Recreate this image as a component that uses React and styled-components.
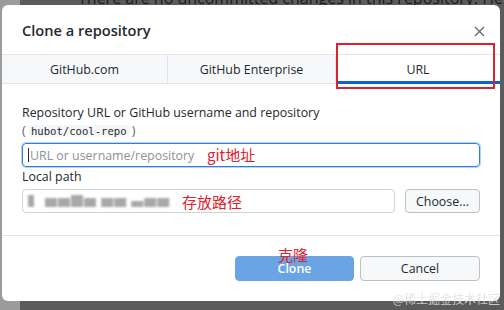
import styled, { createGlobalStyle } from "styled-components"

const Global = createGlobalStyle`
  html, body { margin: 0; padding: 0; }
  body {
    width: 504px;
    height: 310px;
    overflow: hidden;
    font-family: "Open Sans", "Noto Sans", "Noto Sans CJK SC", sans-serif;
    background: #5b5b5b;
  }
`

const Backdrop = styled.div`
  position: relative;
  width: 504px;
  height: 310px;
  overflow: hidden;
  display: flex;
  background: #5b5b5b;
`
const Sidebar = styled.div`
  width: 20px;
  flex-shrink: 0;
  background: #9b9b9b;
`
const BehindText = styled.div`
  margin-top: -13px;
  margin-left: 58px;
  font-size: 16px;
  white-space: nowrap;
  overflow: hidden;
  color: #1c1c1c;
`

const Dialog = styled.div`
  position: absolute;
  left: 2px;
  top: 5px;
  width: 498px;
  height: 296px;
  background: #fff;
  border-radius: 6px;
  display: flex;
  flex-direction: column;
`
const Header = styled.div`
  height: 49px;
  display: flex;
  align-items: center;
  justify-content: space-between;
  padding: 0 14px 0 20px;
`
const Title = styled.div`
  font-size: 14.6px;
  font-weight: 600;
  color: #24292e;
  padding-top: 1px;
`
const Close = styled.button`
  border: 0;
  background: none;
  padding: 0;
  width: 14px;
  height: 14px;
  display: flex;
  align-items: center;
  justify-content: center;
  margin-top: 3px;
`
const Tabs = styled.div`
  display: flex;
  height: 28px;
  border-top: 1px solid #e1e4e8;
  border-bottom: 1px solid #e1e4e8;
`
const Tab = styled.div`
  flex: ${p => p.$w};
  display: flex;
  align-items: center;
  justify-content: center;
  font-size: 12.4px;
  color: #24292e;
  background: ${p => (p.$active ? "#fff" : "#f6f8fa")};
  border-left: ${p => (p.$first ? "0" : "1px solid #e1e4e8")};
  box-shadow: ${p => (p.$active ? "inset 0 -3px 0 #0b64c8" : "none")};
  margin-bottom: ${p => (p.$active ? "-1px" : "0")};
`
const Body = styled.div`
  padding: 20px 20px 0 20px;
  display: flex;
  flex-direction: column;
  height: 131px;
  border-bottom: 1px solid #e1e4e8;
`
const Label = styled.div`
  font-size: 12.4px;
  color: #24292e;
  line-height: 18px;
  margin-top: ${p => p.$mt || 0}px;
`
const Hint = styled.div`
  font-size: 12.4px;
  color: #586069;
  line-height: 18px;
  margin-bottom: 3px;
  code {
    font-family: "DejaVu Sans Mono", "Liberation Mono", monospace;
    font-size: 10.6px;
    color: #24292e;
    background: #f5f6f8;
    padding: 0 2px;
    border-radius: 3px;
  }
`
const Row = styled.div`
  display: flex;
  gap: 10px;
  margin-top: ${p => p.$mt || 0}px;
`
const Field = styled.div`
  position: relative;
  flex: 1;
  height: 24px;
  box-sizing: border-box;
  border: 1px solid ${p => (p.$focus ? "#2f7fd8" : "#cfd3d7")};
  box-shadow: ${p => (p.$focus ? "0 0 0 1px rgba(47,127,216,0.35)" : "none")};
  border-radius: 4px;
  display: flex;
  align-items: center;
  padding-left: 5px;
  font-size: 12.4px;
  color: #8d9297;
`
const Caret = styled.span`
  width: 1px;
  height: 14px;
  background: #24292e;
  margin-right: 1px;
`
const Blurred = styled.span`
  color: #a8a8a8;
  filter: blur(1.2px);
  letter-spacing: 1px;
  font-size: 12px;
`
const Button = styled.button`
  height: ${p => (p.$h || 24)}px;
  width: ${p => p.$w}px;
  box-sizing: border-box;
  border-radius: 4px;
  font-family: inherit;
  font-size: 12.4px;
  padding: 0;
  border: 1px solid ${p => (p.$primary ? "#6ba4e4" : "#bcc1c6")};
  background: ${p => (p.$primary ? "#6ba4e4" : "#f6f8fa")};
  color: ${p => (p.$primary ? "#fff" : "#24292e")};
  font-weight: ${p => (p.$primary ? 600 : 400)};
`
const Footer = styled.div`
  flex: 1;
  display: flex;
  justify-content: flex-end;
  align-items: flex-start;
  gap: 6px;
  padding: 20px 20px 0 0;
  position: relative;
`
const Note = styled.span`
  position: absolute;
  color: #e0202c;
  font-family: "Noto Sans CJK SC", sans-serif;
  font-size: 15px;
  line-height: 17px;
  white-space: nowrap;
`
const RedBox = styled.div`
  position: absolute;
  left: 336px;
  top: 43px;
  width: 155px;
  height: 42px;
  border: 2px solid #d9232e;
`
const Watermark = styled.div`
  position: absolute;
  right: 4px;
  bottom: 3px;
  font-family: "Noto Sans CJK SC", sans-serif;
  font-size: 12px;
  color: rgba(225, 225, 225, 0.85);
`

export default function App() {
  return (
    <>
      <Global />
      <Backdrop>
        <Sidebar />
        <BehindText>There are no uncommitted changes in this repository. Here are some frie</BehindText>
        <Dialog>
          <Header>
            <Title>Clone a repository</Title>
            <Close>
              <svg width="11" height="11" viewBox="0 0 11 11">
                <path d="M1 1L10 10M10 1L1 10" stroke="#666" strokeWidth="1.3" />
              </svg>
            </Close>
          </Header>
          <Tabs>
            <Tab $first $w="0 0 165px">GitHub.com</Tab>
            <Tab $w="0 0 167px">GitHub Enterprise</Tab>
            <Tab $active $w="1">URL</Tab>
          </Tabs>
          <Body>
            <Label>Repository URL or GitHub username and repository</Label>
            <Hint>( <code>hubot/cool-repo</code> )</Hint>
            <Row>
              <Field $focus>
                <Caret />URL or username/repository
                <Note style={{ left: 184, top: 2 }}>git地址</Note>
              </Field>
            </Row>
            <Label $mt={1}>Local path</Label>
            <Row $mt={3}>
              <Field>
                <Blurred>▌ ▆▆█▆ ▆▆ ▄▆▆</Blurred>
                <Note style={{ left: 159, top: 3 }}>存放路径</Note>
              </Field>
              <Button $w={75}>Choose...</Button>
            </Row>
          </Body>
          <Footer>
            <Button $primary $w={119} $h={25}>Clone</Button>
            <Button $w={120} $h={25}>Cancel</Button>
            <Note style={{ left: 276, top: 10 }}>克隆</Note>
          </Footer>
        </Dialog>
        <RedBox />
        <Watermark>@稀土掘金技术社区</Watermark>
      </Backdrop>
    </>
  )
}
